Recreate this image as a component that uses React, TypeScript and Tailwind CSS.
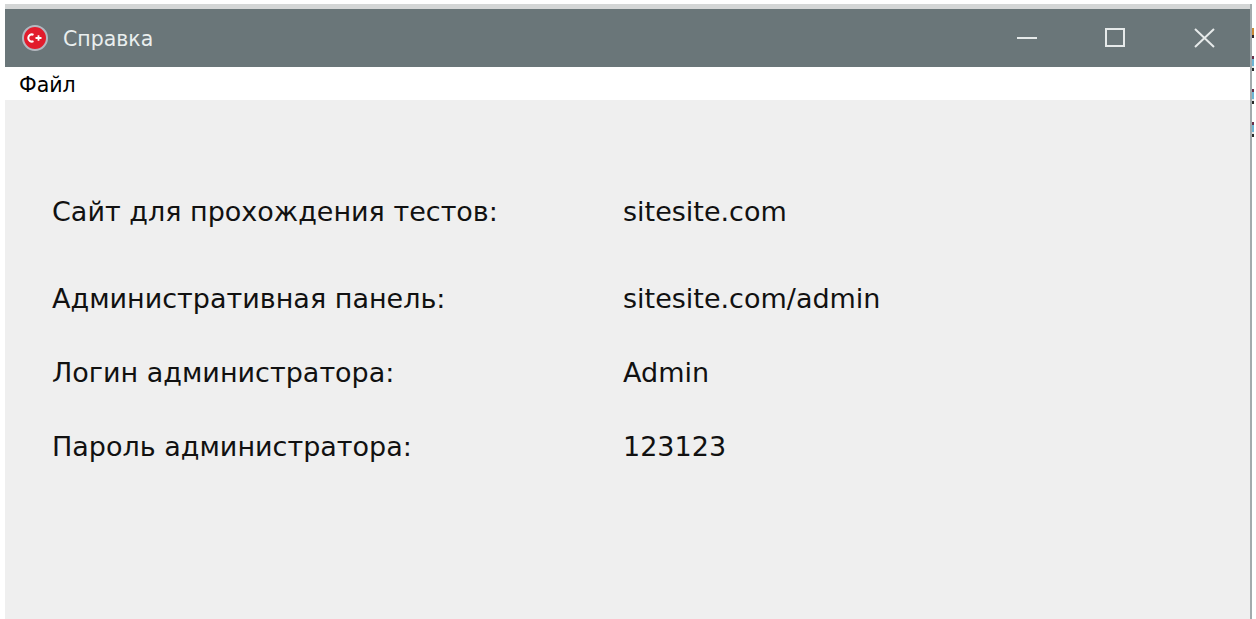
import React from 'react';

const rows = [
  { label: 'Сайт для прохождения тестов:', value: 'sitesite.com', className: 'mb-[13px]' },
  { label: 'Административная панель:', value: 'sitesite.com/admin', className: '' },
  { label: 'Логин администратора:', value: 'Admin', className: '' },
  { label: 'Пароль администратора:', value: '123123', className: '' },
];

const AppIcon = () => (
  <svg viewBox="0 0 26 26" className="w-[26px] h-[26px]">
    <circle cx="13" cy="13" r="12" fill="#e21c2c" stroke="#b4b8c0" strokeWidth="2" />
    <path d="M11.5 9.8a3.6 3.6 0 1 0 0 6.4" fill="none" stroke="#fff" strokeWidth="2" />
    <path d="M13.5 13h6M16.5 10.2v5.6" stroke="#fff" strokeWidth="1.8" />
  </svg>
);

const WindowButtons = () => (
  <svg viewBox="0 0 200 20" className="w-[200px] h-[20px]" fill="none" stroke="#e6eaea" strokeWidth="2">
    <path d="M0 10h20" />
    <rect x="89" y="1" width="18" height="17" />
    <path d="M178 1l19 18M197 1l-19 18" />
  </svg>
);

// sliver of whatever sits behind the window, along its right edge
const EdgeMarks = () => (
  <div className="w-[2px] pt-[24px] flex flex-col shrink-0">
    <div className="h-[7px] bg-[#c98a3a]" />
    <div className="h-[3px] bg-[#33282a]" />
    {[0, 1, 2].map(i => (
      <div key={i} className="mt-[18px] flex flex-col">
        <div className="h-[3px] bg-[#6b2f4a]" />
        <div className="h-[7px] bg-[#6fb4d4]" />
        <div className="h-[2px] bg-[#e4e4e4]" />
        <div className="h-[3px] bg-[#2b2b2b]" />
      </div>
    ))}
  </div>
);

export default function App() {
  return (
    <div className="w-[1256px] h-[619px] bg-white pl-[5px] pt-[4px] overflow-hidden flex font-['DejaVu_Sans',sans-serif]">
      <div className="w-[1247px] h-full flex flex-col border-r-[2px] border-[#a3abad]">
        <div className="h-[5px] bg-[#d4d6d6]" />
        <div className="h-[58px] bg-[#6a7679] flex items-center pl-[17px] text-[#e9eeee]">
          <AppIcon />
          <span className="ml-[15px] pt-[2px] text-[20.5px] leading-none">Справка</span>
          <div className="ml-auto mr-[33px] flex items-center">
            <WindowButtons />
          </div>
        </div>
        <div className="h-[33px] pt-[3px] bg-white flex items-center pl-[14px] text-[20.5px] text-black">Файл</div>
        <div className="flex-1 bg-[#efefef] pt-[74px] pl-[47px] text-[27px] text-[#111]">
          {rows.map(row => (
            <div key={row.label} className={`h-[74px] pt-[2px] flex items-center ${row.className}`}>
              <span className="w-[571px]">{row.label}</span>
              <span>{row.value}</span>
            </div>
          ))}
        </div>
      </div>
      <EdgeMarks />
    </div>
  );
}
